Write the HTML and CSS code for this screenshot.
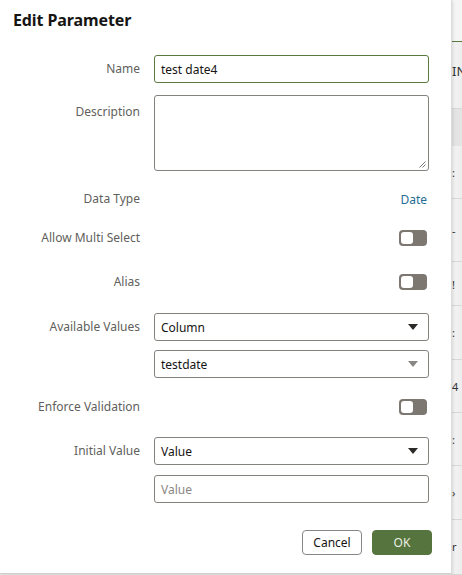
FILE: index.html
```html
<!DOCTYPE html>
<html>
<head>
<meta charset="utf-8">
<link rel="stylesheet" href="styles.css">
</head>
<body>
<div class="page">
  <div class="dialog">
    <h1 class="title">Edit Parameter</h1>
    <div class="form">
      <div class="row r-name">
        <label class="lbl">Name</label>
        <div class="input focus">test date4</div>
      </div>
      <div class="row r-desc">
        <label class="lbl lbl-top">Description</label>
        <div class="textarea">
          <svg class="grip" width="7" height="7" viewBox="0 0 7 7"><path d="M6.5 0.5L0.5 6.5M6.5 3.5L3.5 6.5" stroke="#777" stroke-width="1"/></svg>
        </div>
      </div>
      <div class="row r-type">
        <label class="lbl">Data Type</label>
        <div class="ctrl-right"><span class="link">Date</span></div>
      </div>
      <div class="row r-multi">
        <label class="lbl">Allow Multi Select</label>
        <div class="ctrl-right"><span class="toggle"><span class="knob"></span></span></div>
      </div>
      <div class="row r-alias">
        <label class="lbl">Alias</label>
        <div class="ctrl-right"><span class="toggle"><span class="knob"></span></span></div>
      </div>
      <div class="row r-avail">
        <label class="lbl">Available Values</label>
        <div class="select"><span>Column</span><span class="arrow"></span></div>
      </div>
      <div class="row r-col">
        <span class="lbl"></span>
        <div class="select"><span>testdate</span><span class="arrow light"></span></div>
      </div>
      <div class="row r-enf">
        <label class="lbl">Enforce Validation</label>
        <div class="ctrl-right"><span class="toggle"><span class="knob"></span></span></div>
      </div>
      <div class="row r-init">
        <label class="lbl">Initial Value</label>
        <div class="select"><span>Value</span><span class="arrow"></span></div>
      </div>
      <div class="row r-val">
        <span class="lbl"></span>
        <div class="input placeholder">Value</div>
      </div>
      <div class="buttons">
        <button class="btn cancel">Cancel</button>
        <button class="btn ok">OK</button>
      </div>
    </div>
  </div>
  <div class="backdrop">
    <div class="bd-head"></div>
    <div class="bd-row bd-in">IN</div>
    <div class="bd-row bd-dark"></div>
    <div class="bd-row bd-56">:</div>
    <div class="bd-row bd-66">-</div>
    <div class="bd-row bd-46">!</div>
    <div class="bd-row bd-56">:</div>
    <div class="bd-row bd-56">4</div>
    <div class="bd-row bd-55">:</div>
    <div class="bd-row bd-56">›</div>
    <div class="bd-row bd-58">r</div>
    <div class="bd-row bd-rest"></div>
  </div>
</div>
</body>
</html>
```

FILE: styles.css
```css
* { box-sizing: border-box; }
html, body { margin: 0; padding: 0; }
body {
  width: 462px;
  height: 575px;
  overflow: hidden;
  background: #ececec;
  font-family: "Noto Sans", "Open Sans", Arial, sans-serif;
  font-size: 12px;
  color: #161513;
}
.page {
  display: flex;
  height: 575px;
}
.dialog {
  width: 452px;
  height: 574px;
  flex: none;
  background: #fff;
  border-right: 1px solid #dcdcdc;
  border-bottom: 1px solid #cfcfcf;
  box-shadow: 1px 1px 3px rgba(0,0,0,0.12);
  position: relative;
  z-index: 1;
}
.title {
  margin: 0;
  padding: 9px 0 0 13px;
  height: 55px;
  font-size: 16px;
  font-weight: 700;
  line-height: 22px;
  color: #161513;
  letter-spacing: -0.1px;
}
.form {
  display: flex;
  flex-direction: column;
}
.row {
  display: flex;
  align-items: center;
  height: 28px;
}
.lbl {
  width: 140px;
  flex: none;
  text-align: right;
  color: #615f5c;
  font-size: 12px;
  margin-right: 14px;
  line-height: 16px;
}
.lbl-top { align-self: flex-start; padding-top: 9px; }
.input, .select, .textarea {
  width: 275px;
  height: 28px;
  border: 1px solid #85817d;
  border-radius: 3px;
  padding: 0 6px;
  display: flex;
  align-items: center;
  font-size: 12px;
  color: #161513;
}
.input.focus { border-color: #5a7a3f; }
.placeholder { color: #8a8784; }
.r-desc { height: 76px; margin-top: 12px; align-items: flex-start; }
.textarea {
  height: 76px;
  position: relative;
}
.grip { position: absolute; right: 2px; bottom: 2px; }
.r-type { margin-top: 14px; }
.r-multi { margin-top: 11px; }
.r-alias { margin-top: 16px; }
.r-avail { margin-top: 17px; }
.r-col { margin-top: 9px; }
.r-enf { margin-top: 15px; }
.r-init { margin-top: 16px; }
.r-val { margin-top: 10px; }
.ctrl-right {
  width: 275px;
  display: flex;
  justify-content: flex-end;
  align-items: center;
  padding-right: 2px;
}
.link { color: #1f6c93; font-size: 12px; }
.toggle {
  width: 28px;
  height: 16px;
  background: #7d7772;
  border-radius: 4px;
  display: flex;
  align-items: center;
  padding-left: 2px;
}
.knob {
  width: 12px;
  height: 12px;
  background: #fff;
  border-radius: 3px;
}
.select { justify-content: space-between; padding-right: 10px; }
.arrow {
  width: 0;
  height: 0;
  border-left: 5px solid transparent;
  border-right: 5px solid transparent;
  border-top: 6px solid #2b2a29;
}
.arrow.light { border-top-color: #8a8683; }
.buttons {
  display: flex;
  justify-content: flex-end;
  gap: 10px;
  margin-top: 27px;
  padding-right: 19px;
}
.btn {
  height: 25px;
  border-radius: 4px;
  font-family: "Noto Sans", "Open Sans", Arial, sans-serif;
  font-size: 12px;
  padding: 0;
}
.cancel {
  width: 60px;
  background: #fff;
  border: 1px solid #8a8683;
  color: #161513;
}
.ok {
  width: 60px;
  background: #56743e;
  border: 1px solid #56743e;
  color: #e8eee2;
}
.backdrop {
  flex: 1;
  display: flex;
  flex-direction: column;
  background: linear-gradient(to right, #f4f4f4, #ededed);
  font-size: 12px;
  color: #333;
  overflow: hidden;
}
.bd-head { height: 45px; border-bottom: 1px solid #5a7a3f; background: #f5f5f5; }
.bd-row { border-bottom: 1px solid #d8d8d8; padding-left: 0; line-height: 14px; font-size: 11px; white-space: nowrap; }
.bd-in { height: 70px; padding-top: 22px; font-size: 13px; color: #333; border-bottom-color: #d8d8d8; }
.bd-dark { height: 40px; background: #e4e4e4; border-bottom: none; }
.bd-56 { height: 56px; padding-top: 20px; }
.bd-66 { height: 66px; padding-top: 25px; }
.bd-46 { height: 46px; padding-top: 16px; }
.bd-55 { height: 55px; padding-top: 20px; }
.bd-58 { height: 58px; padding-top: 20px; }
.bd-rest { flex: 1; border-bottom: none; }
```
